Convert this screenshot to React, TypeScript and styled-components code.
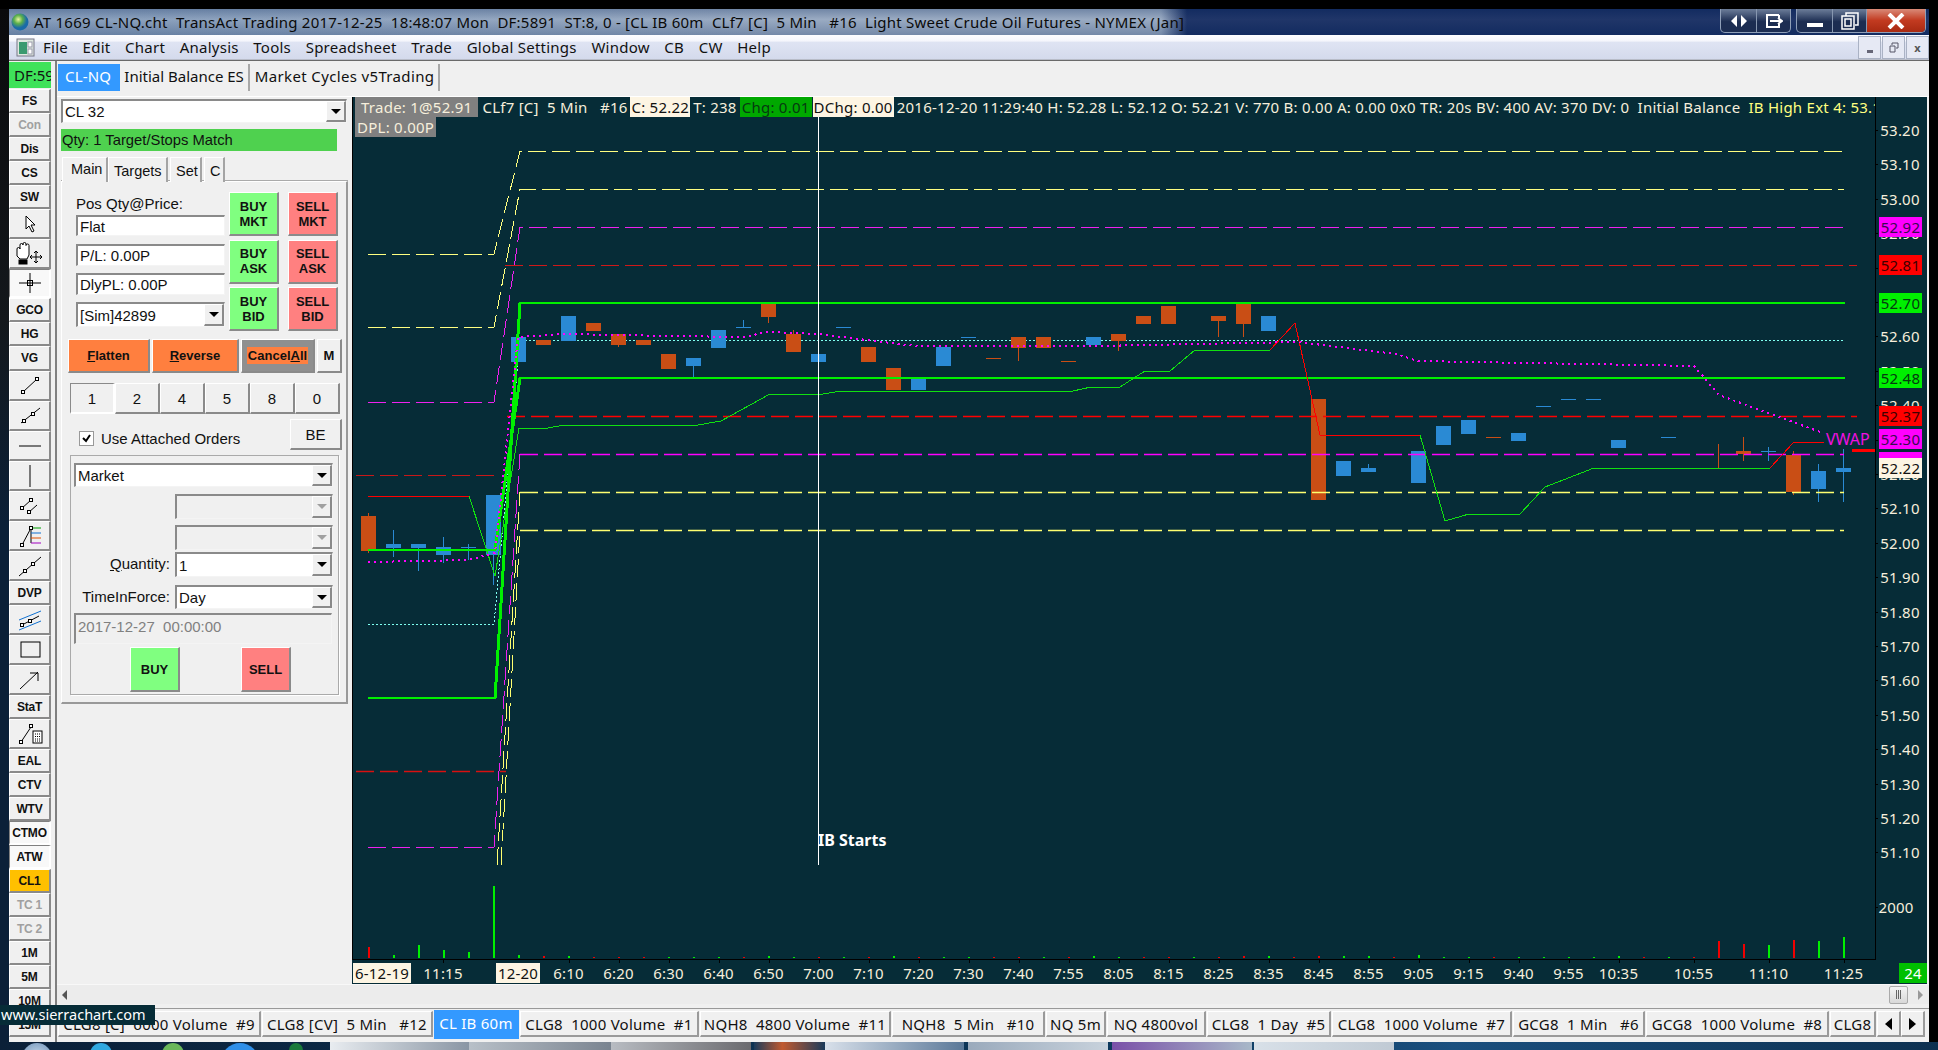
import React from "react";
import styled, { createGlobalStyle } from "styled-components";

const Global = createGlobalStyle`
  html, body { margin: 0; padding: 0; background: #000; overflow: hidden; }
  * { box-sizing: border-box; }
`;

const UI = `"Noto Sans", "Open Sans", sans-serif`;
const PANEL = `"Liberation Sans", Arial, sans-serif`;

const Page = styled.div`
  width: 1938px; height: 1050px; position: relative; overflow: hidden; background: #000;
  display: flex; flex-direction: column; padding-top: 9px; font-family: ${UI};
`;
const Shell = styled.div`display: flex; height: 1033px; flex: none;`;
const LeftEdge = styled.div`width: 9px; flex: none; background: linear-gradient(#0a0a0c 0, #14181c 30%, #0b2038 50%, #0b2038 100%);`;
const AppWindow = styled.div`width: 1920px; flex: none; display: flex; flex-direction: column; background: #f0f0f0;`;

const TitleBar = styled.div`
  height: 26px; flex: none; display: flex; align-items: center; position: relative;
  background:
    linear-gradient(rgba(20,50,100,.28), rgba(255,255,255,.06) 40%, rgba(20,50,100,.25)),
    linear-gradient(to right, #8199b8 0, #94a6bf 40%, #94a6bf 1152px, #12295f 1178px);
`;
const Globe = styled.svg`width: 18px; height: 24px; margin-left: 2px; flex: none;`;
const TitleText = styled.div`
  margin-left: 5px; font-size: 15px; color: #0a0a0a; white-space: pre; letter-spacing: 0.24px; flex: 1;
`;
const CaptionGroup = styled.div`
  display: flex; height: 24px; align-self: flex-start; border: 1px solid #8f9fb8; border-top: none;
  border-radius: 0 0 5px 5px; overflow: hidden; margin-right: ${(p) => p.$mr}px; background: linear-gradient(#6c7d99, #1c2d52 55%, #1c2d52);
`;
const CaptionBtn = styled.div`
  width: ${(p) => p.$w}px; height: 100%; display: flex; align-items: center; justify-content: center;
  border-left: 1px solid #8797b0; color: #fff;
  &:first-child { border-left: none; }
  ${(p) => p.$close && "background: linear-gradient(#d98a78, #c23a20 50%, #a82a12);"}
`;

const MenuBar = styled.div`
  height: 25px; flex: none; display: flex; align-items: center;
  background: linear-gradient(#fdfdff 0, #f5f6fc 25%, #dfe4f3 30%, #d4daec 100%);
  border-bottom: 1px solid #b8bcc8;
`;
const MenuIcon = styled.svg`width: 19px; height: 19px; margin-left: 7px; margin-right: 8px; flex: none;`;
const MenuItem = styled.span`font-size: 15px; color: #111; margin-right: 14.6px; letter-spacing: 0.25px;`;
const MdiGroup = styled.div`display: flex; margin-left: auto; height: 23px; align-self: flex-end; gap: 1px;`;
const MdiBtn = styled.div`
  width: 23px; height: 100%; display: flex; align-items: center; justify-content: center;
  border: 1px solid #aab2c4; background: #e6e9f4; color: #555; font-size: 11px; font-weight: 700;
`;

const MainRow = styled.div`display: flex; flex: 1; min-height: 0; border-top: 1px solid #6a6a6a; position: relative;`;
const Toolbar = styled.div`
  width: 43px; flex: none; padding-left: 0; display: flex; flex-direction: column; overflow: hidden; margin-top: 1px;
`;
const DfBox = styled.div`
  height: 26px; width: 42px; background: #3fe25a; font-size: 15px; color: #111; overflow: hidden;
  white-space: nowrap; padding-left: 5px; line-height: 26px; margin-bottom: 1px; flex: none;
`;
const Tool = styled.div`
  width: 42px; height: ${(p) => p.$h}px; flex: none; display: flex; align-items: center; justify-content: center;
  font: bold 12px ${PANEL}; letter-spacing: -0.2px;
  color: ${(p) => (p.$dim ? "#a0a0a0" : "#111")};
  background: ${(p) => (p.$amber ? "#ffc000" : p.$on ? "#f8f8f8" : "#f0f0f0")};
  border-style: solid; border-width: 1px 2px 2px 1px;
  border-color: ${(p) => (p.$on ? "#808080 #fff #fff #808080" : "#fff #8a8a8a #8a8a8a #fff")};
`;
const ToolIcon = styled.svg`width: 26px; height: 24px; display: block; overflow: visible;`;

const Workspace = styled.div`
  width: 1874px; margin-left: 3px; flex: none; display: flex; flex-direction: column; border-left: 2px solid #808080; background: #f0f0f0;
`;
const TabsTop = styled.div`height: 36px; flex: none; display: flex; padding: 3px 0 0 1px; align-items: flex-start; border-bottom: 1px solid #fff;`;
const TopTab = styled.div`
  height: 27px; font-size: 15px; line-height: 25px; padding: 0 ${(p) => (p.$pad ? p.$pad : 4)}px; white-space: nowrap; color: #111; letter-spacing: ${(p) => p.$ls ?? 0.2}px;
  border-right: 2px solid #a8a8a8; margin-right: 1px;
  ${(p) => p.$active && "background: #3399ff; color: #fff; border-right-color: #3399ff; margin-right: 0;"}
`;
const ContentRow = styled.div`display: flex; height: 887px; flex: none;`;
const Side = styled.div`width: 295px; flex: none; padding: 2px 0 0 4px; background: #f0f0f0;`;
const ChartBox = styled.div`
  width: 1575px; height: 887px; flex: none; position: relative; background: #062c37;
`;
const ChartSvg = styled.svg`display: block; width: 1575px; height: 887px;`;

const InfoOverlay = styled.div`
  position: absolute; left: 0; top: 0; width: 1523px; overflow: hidden; font-size: 15px; color: #f6efdc;
  white-space: pre; line-height: 20px; letter-spacing: 0.25px;
`;
const InfoRow = styled.div`display: flex; padding-left: 3px; height: 20px;`;
const Chip = styled.span`
  padding: 0 ${(p) => p.$px ?? 0}px; margin-left: ${(p) => p.$ml ?? 0}px; flex: none;
  ${(p) => p.$bg && `background: ${p.$bg};`}
  ${(p) => p.$c && `color: ${p.$c};`}
  ${(p) => p.$w && `width: ${p.$w}px;`}
`;

const AxisText = styled.text`font: 15px ${UI}; fill: ${(p) => p.$c || "#f6efdc"}; text-anchor: middle; letter-spacing: 0.2px;`;
const TagRect = styled.rect`shape-rendering: crispEdges;`;
const StartLabel = styled.text`font: bold 16px ${UI}; fill: #fff;`;
const VwapLabel = styled.text`font: 16px ${UI}; fill: #f010e0;`;

const SunkenBox = styled.div`
  display: flex; align-items: ${(p) => (p.$top ? "flex-start" : "center")}; background: ${(p) => (p.$off ? "#f0f0f0" : "#fff")}; flex: none;
  width: ${(p) => p.$w}px; height: ${(p) => p.$h}px; margin-top: ${(p) => p.$mt ?? 0}px;
  border-style: solid; border-width: 2px 1px 1px 2px; border-color: #8a8a8a #f4f4f4 #f4f4f4 #8a8a8a;
  font: 15px ${PANEL}; color: ${(p) => (p.$grey ? "#808080" : "#111")}; padding: ${(p) => (p.$top ? "3px" : "0")} 0 0 2px; overflow: hidden; white-space: pre;
`;
const SelectArrow = styled.div`
  margin-left: auto; width: 20px; height: 100%; flex: none; display: flex; align-items: center; justify-content: center;
  background: #f0f0f0; border-style: solid; border-width: 1px 2px 2px 1px; border-color: #fff #8a8a8a #8a8a8a #fff;
  &::after { content: ""; border-left: 5px solid transparent; border-right: 5px solid transparent;
    border-top: 5px solid ${(p) => (p.$off ? "#a0a0a0" : "#000")}; }
`;
const StatusBar = styled.div`
  width: 276px; height: 22px; margin-top: 6px; background: #4fd14f; font: 14.8px/22px ${PANEL}; color: #111; padding-left: 1px; white-space: nowrap;
`;
const PanelTabs = styled.div`display: flex; height: 25px; margin-top: 6px; padding-left: 1px; position: relative; z-index: 1;`;
const PanelTab = styled.div`
  font: 14.5px ${PANEL}; color: #111; padding: ${(p) => (p.$on ? "3px 8px 0" : "5px 5px 0")}; margin-right: ${(p) => (p.$on ? 0 : 2)}px;
  width: ${(p) => p.$w}px; text-align: center;
  border-style: solid; border-width: 1px 2px 0 1px; border-color: #fff #a4a4a4 #a4a4a4 #fff; background: #f0f0f0;
`;
const TabPanel = styled.div`
  width: 287px; height: 523px; margin-top: -1px; border: 1px solid #fff; border-right: 2px solid #999; border-bottom: 2px solid #999;
  box-shadow: 0 -1px 0 #aaa; padding-top: 10px;
`;
const OrderGrid = styled.div`display: flex; padding-left: 14px;`;
const PosColumn = styled.div`width: 149px; display: flex; flex-direction: column;`;
const PosLabel = styled.div`height: 23px; font: 15px/23px ${PANEL}; color: #111;`;
const BtnColumn = styled.div`width: 50px; margin-left: ${(p) => p.$ml}px; display: flex; flex-direction: column; gap: 3.5px;`;
const Raised = styled.div`
  display: flex; align-items: center; justify-content: center; text-align: center; flex: none;
  width: ${(p) => (p.$w ? `${p.$w}px` : "auto")}; height: ${(p) => p.$h}px; margin-left: ${(p) => (p.$push ? "auto" : "0")};
  background: ${(p) => p.$bg || "#f0f0f0"};
  border-style: solid; border-width: 1px 2px 2px 1px;
  border-color: ${(p) => (p.$down ? "#8a8a8a #fff #fff #8a8a8a" : "#fff #8a8a8a #8a8a8a #fff")};
  font: ${(p) => (p.$plain ? "" : "bold ")}${(p) => p.$fs || 13}px/15px ${PANEL}; color: #111;
`;
const ActionRow = styled.div`display: flex; gap: 2px; margin: 8px 0 0 6px;`;
const CancelText = styled.span`background: #ff7f3f; padding: 1px;`;
const NumRow = styled.div`display: flex; margin: 10px 0 0 8px;`;
const CheckRow = styled.div`display: flex; align-items: center; margin: 5px 0 0 17px; width: 263px;`;
const CheckMark = styled.div`
  width: 15px; height: 15px; border: 1px solid #999; background: #fff; display: flex; align-items: center; justify-content: center; margin-top: 8px;
`;
const CheckLabel = styled.span`font: 15px ${PANEL}; color: #111; margin: 8px 0 0 7px;`;
const GroupBox = styled.div`
  width: 269px; height: 240px; margin: 5px 0 0 8px; border: 1px solid #aaa; box-shadow: 1px 1px 0 #fff; padding: 7px 5px 0 3px;
`;
const FieldRow = styled.div`display: flex; justify-content: flex-end; align-items: center; gap: 5px; margin-top: ${(p) => p.$mt}px; height: ${(p) => p.$h}px;`;
const FieldLabel = styled.span`font: 15px ${PANEL}; color: #111; margin-top: -2px;`;
const SubmitRow = styled.div`display: flex; gap: 61px; margin: 3px 0 0 56px;`;

const HScroll = styled.div`
  height: 20px; flex: none; display: flex; align-items: center; justify-content: space-between; padding: 0 6px 0 5px;
  background: #ececec; border-top: 1px solid #f8f8f8;
`;
const ScrollEnd = styled.div`display: flex; align-items: center; gap: 10px;`;
const ScrollArrow = styled.div`
  width: 0; height: 0; border-top: 5px solid transparent; border-bottom: 5px solid transparent;
  ${(p) => (p.$left ? "border-right: 5px solid #555;" : "border-left: 5px solid #999;")}
`;
const Thumb = styled.div`
  width: 19px; height: 18px; border: 1px solid #aaa; border-radius: 2px; background: linear-gradient(#f4f4f4, #d8d8d8);
  display: flex; align-items: center; justify-content: center; gap: 1px;
  & > i { display: block; width: 1px; height: 9px; background: #666; }
`;
const BottomTabs = styled.div`
  height: 34px; margin-top: 4px; flex: none; display: flex; align-items: flex-start; padding: 1px 0 0 1px; border-top: 1px solid #999; background: #f0f0f0; overflow: hidden; position: relative;
`;
const BottomTab = styled.div`
  height: 26px; width: ${(p) => p.$w}px; margin-top: 1px; flex: none; overflow: hidden; font-size: 15px; line-height: 24px; text-align: center; white-space: pre; color: #111;
  border-style: solid; border-width: 1px 2px 2px 1px; border-color: #fff #9a9a9a #9a9a9a #fff; letter-spacing: 0.25px; margin-right: 1px;
  ${(p) => p.$active && "background: #3399ff; color: #fff; margin-top: 0; height: 29px; border-color: #3399ff;"}
`;
const TabArrow = styled.div`
  width: 24px; height: 26px; margin-top: 1px; flex: none; display: flex; align-items: center; justify-content: center;
  border-style: solid; border-width: 1px 2px 2px 1px; border-color: #fff #9a9a9a #9a9a9a #fff;
  &::after { content: ""; border-top: 6px solid transparent; border-bottom: 6px solid transparent;
    ${(p) => (p.$left ? "border-right: 7px solid #000;" : "border-left: 7px solid #000;")} }
`;
const Url = styled.div`
  position: absolute; left: 0; top: 1005px; width: 155px; height: 20px; background: #062c37; color: #fff; font-size: 14.5px; line-height: 19px; white-space: nowrap; overflow: hidden; padding-left: 1px;
`;
const Taskbar = styled.div`
  height: 8px; flex: none; display: flex; align-items: flex-start; overflow: hidden;
  background: linear-gradient(to right, #0b2038 0, #0d3a5e 60%, #1a4f7e 75%, #0d3050 100%);
`;
const Orb = styled.div`
  width: ${(p) => p.$d}px; height: ${(p) => p.$d}px; border-radius: 50%; flex: none; margin-left: ${(p) => p.$ml}px; margin-top: 1px;
  background: ${(p) => p.$c};
`;
const TaskBtn = styled.div`
  height: 8px; width: ${(p) => p.$w}px; margin-left: ${(p) => p.$ml ?? 0}px; flex: none; background: ${(p) => p.$bg};
`;

/* ------- chart data ------- */
type C = [number, "b" | "o", number, number, number?, number?];
const candles: C[] = [
  [0, "o", 516, 551, 513, 553], [1, "b", 544, 548, 530, 557], [2, "b", 544, 548, 544, 571], [3, "b", 547, 555, 537, 563],
  [4, "b", 547, 547, 544, 560], [5, "b", 495, 555, 495, 585], [6, "b", 337, 362, 327, 362], [7, "o", 340, 345],
  [8, "b", 316, 341], [9, "o", 323, 331], [10, "o", 334, 345, 334, 347], [11, "o", 340, 345], [12, "o", 354, 369],
  [13, "b", 358, 366, 358, 378], [14, "b", 330, 348], [15, "b", 327, 327, 320, 327], [16, "o", 304, 317, 304, 323],
  [17, "o", 334, 352, 330, 352], [18, "b", 354, 362], [19, "b", 327, 327], [20, "o", 347, 362], [21, "o", 368, 390],
  [22, "b", 379, 390], [23, "b", 347, 366], [24, "b", 337, 337], [25, "o", 358, 358], [26, "o", 337, 348, 337, 361],
  [27, "o", 337, 348], [28, "o", 361, 361], [29, "b", 337, 345], [30, "o", 334, 341, 334, 351], [31, "o", 316, 324],
  [32, "o", 306, 324], [34, "o", 316, 321, 316, 337], [35, "o", 304, 324, 304, 337], [36, "b", 316, 331],
  [38, "o", 399, 500], [39, "b", 461, 476], [40, "b", 468, 472, 464, 472], [42, "b", 451, 483], [43, "b", 426, 445],
  [44, "b", 420, 434], [45, "o", 437, 437], [46, "b", 433, 441], [47, "b", 406, 406], [48, "b", 399, 399], [49, "b", 399, 399],
  [50, "b", 440, 448], [52, "b", 437, 437], [54, "o", 468, 468, 444, 468], [55, "o", 451, 454, 437, 461],
  [56, "b", 451, 451, 447, 461], [57, "o", 455, 492, 451, 495], [58, "b", 471, 489, 464, 502], [59, "b", 468, 472, 449, 502],
];
const cx = (i: number) => 368.5 + 25 * i;
const vols: [number, "g" | "r", number][] = [
  [0, "r", 11], [1, "g", 3], [2, "g", 13], [3, "g", 8], [4, "g", 6], [5, "g", 72], [6, "g", 3], [7, "r", 2], [8, "g", 2], [9, "r", 1], [10, "r", 1],
  [11, "r", 1], [12, "g", 1], [13, "g", 1], [14, "g", 1], [15, "r", 1], [16, "g", 2], [17, "g", 1], [18, "r", 1], [19, "g", 1], [20, "r", 1],
  [21, "g", 2], [22, "r", 1], [23, "g", 1], [24, "g", 1], [25, "r", 1], [26, "r", 1], [27, "g", 1], [28, "r", 1], [29, "g", 2], [30, "g", 1],
  [31, "r", 1], [32, "r", 1], [33, "g", 1], [34, "r", 1], [35, "r", 2], [36, "g", 2], [37, "r", 1], [38, "r", 2], [39, "g", 2], [40, "g", 2],
  [41, "r", 1], [42, "g", 3], [43, "g", 1], [44, "g", 1], [45, "r", 1], [46, "g", 1], [47, "g", 1], [48, "g", 1], [49, "g", 1], [50, "g", 2],
  [51, "r", 1], [52, "g", 1], [53, "r", 1], [54, "r", 17], [55, "r", 14], [56, "g", 13], [57, "r", 18], [58, "g", 17], [59, "g", 21],
];
const prices = ["53.20", "53.10", "53.00", "52.90", "52.80", "52.70", "52.60", "52.50", "52.40", "52.30", "52.20", "52.10", "52.00", "51.90", "51.80", "51.70", "51.60", "51.50", "51.40", "51.30", "51.20", "51.10"];
const tags: [string, number, string, string][] = [
  ["52.92", 217, "#ff00ff", "#3a0a50"], ["52.81", 255, "#ff0000", "#400000"], ["52.70", 293, "#00f000", "#053a10"],
  ["52.48", 368, "#00f000", "#053a10"], ["52.37", 406, "#ff0000", "#400000"], ["52.30", 429, "#ff00ff", "#3a0a50"],
];
const times: [string, number][] = [
  ["11:15", 443], ["6:10", 568.5], ["6:20", 618.5], ["6:30", 668.5], ["6:40", 718.5], ["6:50", 768.5], ["7:00", 818.5], ["7:10", 868.5],
  ["7:20", 918.5], ["7:30", 968.5], ["7:40", 1018.5], ["7:55", 1068.5], ["8:05", 1118.5], ["8:15", 1168.5], ["8:25", 1218.5], ["8:35", 1268.5],
  ["8:45", 1318.5], ["8:55", 1368.5], ["9:05", 1418.5], ["9:15", 1468.5], ["9:40", 1518.5], ["9:55", 1568.5], ["10:35", 1618.5],
  ["10:55", 1693.5], ["11:10", 1768.5], ["11:25", 1843.5],
];
const upperDashed: [string, string][] = [
  ["368,254 494,254 520,151 1844,151", "#ffff80"],
  ["368,327 494,327 520,189 1844,189", "#ffff80"],
  ["368,402 494,402 520,227 1844,227", "#ee22ee"],
  ["356,475 495,475", "#c81818"],
  ["505,265 1857,265", "#d01818"],
  ["368,847 494,847 520,454", "#ee22ee"],
  ["497,865 520,492", "#ffff70"],
  ["501,865 520,530", "#ffff70"],
];
const lowerDashed: [string, string][] = [
  ["520,454 1844,454", "#ff00ff"],
  ["356,771 506,771", "#d81010"],
  ["507,416 1857,416", "#ff0000"],
  ["520,492 1844,492", "#ffff70"],
  ["520,530 1844,530", "#ffff70"],
];
const greenA = "469,496 495,576 519,428 548,428 564,425 698,425 721,421 770,394 823,394 841,391 1073,391 1091,387 1120,387 1145,371 1170,371 1195,350 1270,350";
const redA = "1270,350 1295,323 1320,435 1420,435";
const greenB = "1420,435 1445,521 1469,514 1520,514 1545,487 1594,468 1770,468";
const redB = "1770,468 1794,442 1824,442";
const vwap = "368,562 468,560 495,553 518,337 564,334 671,336 743,337 768,332 818,334 907,345 918,346 1096,346 1196,344 1298,342 1396,354 1418,361 1694,366 1719,395 1774,415 1823,433";

const Chart = () => (
  <ChartSvg viewBox="352 97 1575 887">
    <g shapeRendering="crispEdges">
      <rect x="352" y="97" width="1" height="862" fill="#000" />
      {upperDashed.map(([p, c], i) => <polyline key={i} points={p} fill="none" stroke={c} strokeWidth="1" strokeDasharray="18 6" />)}
      <polyline points="368,624 494,624 520,340 1845,340" fill="none" stroke="#7ffff0" strokeWidth="1" strokeDasharray="2 2" />
      {candles.map(([i, k, t, b, wt, wb]) => {
        const col = k === "b" ? "#2a8ad4" : "#c94e15";
        const x = cx(i);
        return (
          <g key={i}>
            {wt !== undefined && <rect x={x - 0.5} y={wt} width="1" height={(wb as number) - wt} fill={col} />}
            <rect x={x - 7.5} y={t} width="15" height={Math.max(b - t, 1)} fill={col} />
          </g>
        );
      })}
    </g>
    <g transform="translate(0 .5)">
      {lowerDashed.map(([p, c], i) => <polyline key={i} points={p} fill="none" stroke={c} strokeWidth="1.5" strokeDasharray="18 6" />)}
    </g>
    <g shapeRendering="crispEdges">
      <polyline points="368,698 495,698 520,303 1845,303" fill="none" stroke="#00f000" strokeWidth="2" />
      <polyline points="368,550 495,550 520,378 1845,378" fill="none" stroke="#00f000" strokeWidth="2" />
      <line x1="495" y1="698" x2="520" y2="303" stroke="#00f000" strokeWidth="3" />
      <line x1="495" y1="550" x2="520" y2="378" stroke="#00f000" strokeWidth="3" />
      <line x1="368" y1="496" x2="469" y2="496" stroke="#ff0000" />
      <polyline points={greenA} fill="none" stroke="#10e010" />
      <polyline points={redA} fill="none" stroke="#ff0000" />
      <polyline points={greenB} fill="none" stroke="#10e010" />
      <polyline points={redB} fill="none" stroke="#ff0000" />
      <polyline points={vwap} fill="none" stroke="#ff00ff" strokeWidth="2" strokeDasharray="2 4" />
      <line x1="818" y1="117" x2="818" y2="865" stroke="#fff" />
      <rect x="1852" y="449" width="23" height="3" fill="#ff0000" />
      {vols.map(([i, k, h]) => (
        <rect key={i} x={cx(i) - 1} y={958 - h} width={2} height={h} fill={k === "g" ? "#00f000" : "#f00000"} />
      ))}
      <rect x="1875" y="97" width="1" height="862" fill="#000" />
      <rect x="352" y="958.5" width="1524" height="1.5" fill="#000" />
      {times.map(([, x]) => <rect key={x} x={x} y="960" width="1" height="3" fill="#000" />)}
      {prices.map((_, i) => <rect key={i} x="1876" y={130 + i * 34.4} width="2" height="1" fill="#000" />)}
    </g>
    {prices.map((p, i) => <AxisText key={p} x="1900" y={136 + i * 34.4}>{p}</AxisText>)}
    <AxisText x="1896" y="913">2000</AxisText>
    <rect x="1876" y="907" width="2" height="1" fill="#000" />
    {tags.map(([t, y, bg, fg]) => (
      <g key={t}>
        <TagRect x="1879" y={y} width="43" height="20" fill={bg} />
        <AxisText x="1900.5" y={y + 15.5} $c={fg}>{t}</AxisText>
      </g>
    ))}
    <TagRect x="1879" y="452" width="43" height="7" fill="#ff00ff" />
    <TagRect x="1879" y="458" width="43" height="20" fill="#fdf5e3" />
    <AxisText x="1900.5" y="473.5" $c="#111">52.22</AxisText>
    <VwapLabel x="1826" y="445">VWAP</VwapLabel>
    <StartLabel x="818" y="846">IB Starts</StartLabel>
    <TagRect x="353" y="963" width="58" height="20" fill="#fdf5e3" />
    <AxisText x="382" y="978.5" $c="#111">6-12-19</AxisText>
    <TagRect x="496" y="963" width="44" height="20" fill="#fdf5e3" />
    <AxisText x="518" y="978.5" $c="#111">12-20</AxisText>
    {times.map(([t, x]) => <AxisText key={t} x={x} y="978.5">{t}</AxisText>)}
    <TagRect x="1899" y="963" width="28" height="20" fill="#00c000" />
    <AxisText x="1913" y="978.5" $c="#fff">24</AxisText>
  </ChartSvg>
);

/* ------- toolbar icons ------- */
const Sq = ({ x, y }: { x: number; y: number }) => <rect x={x - 1.5} y={y - 1.5} width="3" height="3" fill="#fff" stroke="#000" />;
const icons: Record<string, React.ReactNode> = {
  pointer: <path d="M9 4 L9 17 L12 14 L15 20 L17 19 L14 13 L18 13 Z" fill="#fff" stroke="#000" />,
  hand: (
    <g stroke="#000" fill="none" transform="translate(-2 0)">
      <path d="M2 14 V7 q0-1.5 1.5-1.5 T5 7 V3 q0-1.5 1.5-1.5 T8 3 V2 q0-1.5 1.5-1.5 T11 2 V3.5 q0-1.5 1.5-1.5 T14 3.5 V13 L12 17 H5 Z" fill="#fff" />
      <rect x="4" y="18" width="8" height="4" fill="#000" />
      <path d="M21 9 V21 M15 15 H27 M19 11 L21 9 L23 11 M19 19 L21 21 L23 19 M17 13 L15 15 L17 17 M25 13 L27 15 L25 17" />
    </g>
  ),
  cross: <g stroke="#000" fill="none"><path d="M13 2 V22 M2 12 H24" /><rect x="10.5" y="9.5" width="5" height="5" /></g>,
  line1: <g><path d="M6 18 L20 5" stroke="#000" /><Sq x={6} y={18} /><Sq x={20} y={5} /></g>,
  line2: <g><path d="M4 19 L23 4" stroke="#000" /><Sq x={7} y={17} /><Sq x={16} y={10} /></g>,
  hline: <path d="M2 12 H24" stroke="#000" />,
  vline: <path d="M13 1 V23" stroke="#000" />,
  para: <g><path d="M4 15 L14 6 M11 19 L20 11" stroke="#000" /><Sq x={5} y={14} /><Sq x={14} y={6} /><Sq x={12} y={18} /></g>,
  fib: (
    <g>
      <path d="M5 21 L14 4 V19" stroke="#000" fill="none" />
      <path d="M14 4 H24" stroke="#00a000" /><path d="M14 9 H24" stroke="#1070d0" /><path d="M14 14 H24" stroke="#e05000" /><path d="M14 19 H24" stroke="#a000c0" />
      <Sq x={5} y={21} /><Sq x={14} y={4} />
    </g>
  ),
  ext: <g><path d="M2 22 L24 3" stroke="#000" /><Sq x={8} y={17} /><Sq x={16} y={10} /></g>,
  chan: (
    <g>
      <path d="M2 12 L24 3 M2 22 L24 13" stroke="#1070d0" />
      <path d="M5 17 L22 8" stroke="#000" /><Sq x={5} y={17} /><Sq x={13} y={13} />
    </g>
  ),
  rect: <rect x="4" y="4" width="19" height="15" fill="none" stroke="#000" />,
  arrow: <path d="M3 21 L21 4 M13 5 H21 V13" stroke="#000" fill="none" />,
  calc: (
    <g>
      <path d="M4 20 L14 5" stroke="#000" /><Sq x={4} y={20} /><Sq x={14} y={4} />
      <rect x="16" y="9" width="9" height="12" fill="#fff" stroke="#000" />
      <path d="M18 12 H23 M18 14.5 H23 M18 17 H23 M18 19 H23" stroke="#000" strokeDasharray="1 1" />
    </g>
  ),
};
type T = { l?: string; i?: string; h: number; dim?: boolean; on?: boolean; amber?: boolean };
const tools: T[] = [
  { l: "FS", h: 24 }, { l: "Con", h: 24, dim: true }, { l: "Dis", h: 24 }, { l: "CS", h: 24 }, { l: "SW", h: 24 },
  { i: "pointer", h: 30 }, { i: "hand", h: 30 }, { i: "cross", h: 29, on: true }, { l: "GCO", h: 24 }, { l: "HG", h: 24 }, { l: "VG", h: 25 },
  { i: "line1", h: 30 }, { i: "line2", h: 30 }, { i: "hline", h: 30 }, { i: "vline", h: 30 }, { i: "para", h: 30 }, { i: "fib", h: 30 }, { i: "ext", h: 30 },
  { l: "DVP", h: 24 }, { i: "chan", h: 30 }, { i: "rect", h: 30 }, { i: "arrow", h: 30 }, { l: "StaT", h: 24 }, { i: "calc", h: 30 },
  { l: "EAL", h: 24 }, { l: "CTV", h: 24 }, { l: "WTV", h: 24 }, { l: "CTMO", h: 24, on: true }, { l: "ATW", h: 24, on: true }, { l: "CL1", h: 24, amber: true },
  { l: "TC 1", h: 24, dim: true }, { l: "TC 2", h: 24, dim: true }, { l: "1M", h: 24 }, { l: "5M", h: 24 }, { l: "10M", h: 24 }, { l: "15M", h: 24 },
];

const menus = ["File", "Edit", "Chart", "Analysis", "Tools", "Spreadsheet", "Trade", "Global Settings", "Window", "CB", "CW", "Help"];
const bottomTabs: [string, number, boolean?][] = [
  ["CLG8 [C]  6000 Volume  #9", 203], ["CLG8 [CV]  5 Min   #12", 171], ["CL IB 60m", 85, true], ["CLG8  1000 Volume  #1", 179],
  ["NQH8  4800 Volume  #11", 191], ["NQH8  5 Min   #10", 153], ["NQ 5m", 60], ["NQ 4800vol", 99], ["CLG8  1 Day  #5", 124],
  ["CLG8  1000 Volume  #7", 180], ["GCG8  1 Min   #6", 132], ["GCG8  1000 Volume  #8", 183], ["CLG8", 46],
];

const Select = ({ w, h, mt, text, off }: { w: number; h: number; mt?: number; text?: string; off?: boolean }) => (
  <SunkenBox $w={w} $h={h} $mt={mt} $off={off}>{text}<SelectArrow $off={off} /></SunkenBox>
);

export default function App() {
  return (
    <Page>
      <Global />
      <Shell>
        <LeftEdge />
        <AppWindow>
          <TitleBar>
            <Globe viewBox="0 0 18 24">
              <defs><radialGradient id="gl" cx="40%" cy="35%"><stop offset="0" stopColor="#e8f4a0" /><stop offset=".5" stopColor="#5db04a" /><stop offset="1" stopColor="#1a6aa8" /></radialGradient></defs>
              <circle cx="9" cy="12" r="8.5" fill="url(#gl)" />
            </Globe>
            <TitleText>AT 1669 CL-NQ.cht  TransAct Trading 2017-12-25  18:48:07 Mon  DF:5891  ST:8, 0 - [CL IB 60m  CLf7 [C]  5 Min   #16  Light Sweet Crude Oil Futures - NYMEX (Jan]</TitleText>
            <CaptionGroup $mr={5}>
              <CaptionBtn $w={35}><svg width="18" height="16"><path d="M7 2 L1 8 L7 14 Z M11 2 L17 8 L11 14 Z" fill="#fff" /></svg></CaptionBtn>
              <CaptionBtn $w={34}><svg width="18" height="16"><path d="M14 2 H2 V14 H14 V11 M14 5 V2 M5 8 H17 M13 5 L17 8 L13 11" stroke="#fff" strokeWidth="2" fill="none" /></svg></CaptionBtn>
            </CaptionGroup>
            <CaptionGroup $mr={3}>
              <CaptionBtn $w={35}><svg width="16" height="16"><rect x="0" y="10" width="16" height="4" fill="#fff" /></svg></CaptionBtn>
              <CaptionBtn $w={34}><svg width="18" height="18"><path d="M5 4 V1 H17 V13 H14 M1 4 H13 V17 H1 Z M4 7 H10 V14 H4 Z" stroke="#fff" strokeWidth="1.5" fill="none" /></svg></CaptionBtn>
              <CaptionBtn $w={59} $close><svg width="18" height="16"><path d="M2 1 L16 15 M16 1 L2 15" stroke="#fff" strokeWidth="4" /></svg></CaptionBtn>
            </CaptionGroup>
          </TitleBar>
          <MenuBar>
            <MenuIcon viewBox="0 0 19 19">
              <rect x="1" y="1" width="17" height="17" fill="#dfe8e0" stroke="#778" />
              <rect x="3" y="4" width="8" height="12" fill="#3a9a70" /><rect x="12" y="4" width="4" height="5" fill="#fff" stroke="#99a" /><rect x="12" y="11" width="4" height="5" fill="#fff" stroke="#99a" />
            </MenuIcon>
            {menus.map((m) => <MenuItem key={m}>{m}</MenuItem>)}
            <MdiGroup>
              <MdiBtn><svg width="8" height="12"><rect x="1" y="8" width="6" height="3" fill="#667" /></svg></MdiBtn>
              <MdiBtn><svg width="10" height="12"><path d="M3 3 V1 H9 V6 H7 M1 4 H6 V10 H1 Z" stroke="#556" fill="none" /></svg></MdiBtn>
              <MdiBtn>x</MdiBtn>
            </MdiGroup>
          </MenuBar>
          <MainRow>
            <Toolbar>
              <DfBox>DF:59</DfBox>
              {tools.map((t, i) => (
                <Tool key={i} $h={t.h} $dim={t.dim} $on={t.on} $amber={t.amber}>
                  {t.l ?? <ToolIcon viewBox="0 0 26 24">{icons[t.i as string]}</ToolIcon>}
                </Tool>
              ))}
            </Toolbar>
            <Workspace>
              <TabsTop>
                <TopTab $active $pad={7}>CL-NQ</TopTab>
                <TopTab $ls={0}>Initial Balance ES</TopTab>
                <TopTab $ls={0.35}>Market Cycles v5Trading</TopTab>
              </TabsTop>
              <ContentRow>
                <Side>
                  <Select w={286} h={24} text="CL 32" />
                  <StatusBar>Qty: 1 Target/Stops Match</StatusBar>
                  <PanelTabs>
                    <PanelTab $on $w={46}>Main</PanelTab>
                    <PanelTab $w={60}>Targets</PanelTab>
                    <PanelTab $w={32}>Set</PanelTab>
                    <PanelTab $w={21}>C</PanelTab>
                  </PanelTabs>
                  <TabPanel>
                    <OrderGrid>
                      <PosColumn>
                        <PosLabel>Pos Qty@Price:</PosLabel>
                        <SunkenBox $w={149} $h={21}>Flat</SunkenBox>
                        <SunkenBox $w={149} $h={22} $mt={8}>P/L: 0.00P</SunkenBox>
                        <SunkenBox $w={149} $h={22} $mt={7}>DlyPL: 0.00P</SunkenBox>
                        <Select w={149} h={25} mt={7} text="[Sim]42899" />
                      </PosColumn>
                      <BtnColumn $ml={4}>
                        <Raised $h={44} $bg="#80ff80">BUY<br />MKT</Raised>
                        <Raised $h={44} $bg="#80ff80">BUY<br />ASK</Raised>
                        <Raised $h={44} $bg="#80ff80">BUY<br />BID</Raised>
                      </BtnColumn>
                      <BtnColumn $ml={9}>
                        <Raised $h={44} $bg="#ff8080">SELL<br />MKT</Raised>
                        <Raised $h={44} $bg="#ff8080">SELL<br />ASK</Raised>
                        <Raised $h={44} $bg="#ff8080">SELL<br />BID</Raised>
                      </BtnColumn>
                    </OrderGrid>
                    <ActionRow>
                      <Raised $w={82} $h={34} $bg="#ff7f3f"><span><u>F</u>latten</span></Raised>
                      <Raised $w={87} $h={34} $bg="#ff7f3f"><span><u>R</u>everse</span></Raised>
                      <Raised $w={74} $h={34} $bg="#8f8f8f"><CancelText>Cancel<u>A</u>ll</CancelText></Raised>
                      <Raised $w={25} $h={34}>M</Raised>
                    </ActionRow>
                    <NumRow>
                      {["1", "2", "4", "5", "8", "0"].map((n, i) => (
                        <Raised key={n} $w={45} $h={31} $down={i === 0} $plain $fs={15}>{n}</Raised>
                      ))}
                    </NumRow>
                    <CheckRow>
                      <CheckMark><svg width="11" height="11"><path d="M2 5 L5 8 L9 2" stroke="#000" strokeWidth="2" fill="none" /></svg></CheckMark>
                      <CheckLabel>Use Attached Orders</CheckLabel>
                      <Raised $push $w={52} $h={31} $plain $fs={15}>BE</Raised>
                    </CheckRow>
                    <GroupBox>
                      <Select w={259} h={24} text="Market" />
                      <FieldRow $mt={7} $h={25}><Select w={158} h={25} off /></FieldRow>
                      <FieldRow $mt={6} $h={25}><Select w={158} h={25} off /></FieldRow>
                      <FieldRow $mt={2} $h={25}><FieldLabel><u>Q</u>uantity:</FieldLabel><Select w={158} h={25} text="1" /></FieldRow>
                      <FieldRow $mt={8} $h={24}><FieldLabel>TimeInForce:</FieldLabel><Select w={158} h={24} text="Day" /></FieldRow>
                      <SunkenBox $w={258} $h={31} $mt={4} $off $grey $top>2017-12-27  00:00:00</SunkenBox>
                      <SubmitRow>
                        <Raised $w={50} $h={45} $bg="#80ff80">BUY</Raised>
                        <Raised $w={50} $h={45} $bg="#ff8080">SELL</Raised>
                      </SubmitRow>
                    </GroupBox>
                  </TabPanel>
                </Side>
                <ChartBox>
                  <Chart />
                  <InfoOverlay>
                    <InfoRow>
                      <Chip $bg="#808080" $px={6}>Trade: 1@52.91</Chip>
                      <Chip $ml={4} $w={147}>CLf7 [C]  5 Min   #16</Chip>
                      <Chip $ml={1} $bg="#fdf5e3" $c="#111" $px={1}>C: 52.22</Chip>
                      <Chip $ml={3}>T: 238</Chip>
                      <Chip $ml={3} $bg="#00a800" $c="#063a10" $px={2}>Chg: 0.01</Chip>
                      <Chip $ml={1} $bg="#fdf5e3" $c="#111" $px={1}>DChg: 0.00</Chip>
                      <Chip $ml={3}>2016-12-20 11:29:40 H: 52.28 L: 52.12 O: 52.21 V: 770 B: 0.00 A: 0.00 0x0 TR: 20s BV: 400 AV: 370 DV: 0  Initial Balance</Chip>
                      <Chip $ml={8} $c="#ffff80">IB High Ext 4: 53.15</Chip>
                    </InfoRow>
                    <InfoRow>
                      <Chip $bg="#808080" $px={2}>DPL: 0.00P</Chip>
                    </InfoRow>
                  </InfoOverlay>
                </ChartBox>
              </ContentRow>
              <HScroll>
                <ScrollArrow $left />
                <ScrollEnd><Thumb><i /><i /><i /></Thumb><ScrollArrow /></ScrollEnd>
              </HScroll>
              <BottomTabs>
                {bottomTabs.map(([t, w, a]) => <BottomTab key={t} $w={w} $active={a}>{t}</BottomTab>)}
                <TabArrow $left />
                <TabArrow />
              </BottomTabs>
            </Workspace>
          </MainRow>
        </AppWindow>
      </Shell>
      <Taskbar>
        <Orb $d={30} $ml={22} $c="radial-gradient(#cfe0f0,#6b8fb5)" />
        <Orb $d={22} $ml={38} $c="#2fa8e0" />
        <Orb $d={22} $ml={50} $c="#6ab85a" />
        <Orb $d={38} $ml={37} $c="#2f8fe8" />
        <Orb $d={14} $ml={30} $c="#1a7a3a" />
        <TaskBtn $w={139} $ml={27} $bg="linear-gradient(to right,#e8ecf0,#8a96a4)" />
        <TaskBtn $w={142} $bg="linear-gradient(to right,#b8c0c8,#7a8490)" />
        <TaskBtn $w={140} $bg="linear-gradient(to right,#b8bcc2,#6a6a6e)" />
        <TaskBtn $w={71} $ml={3} $bg="linear-gradient(to right,#1a3a5a,#c05a30 40%,#1a3a5a)" />
        <TaskBtn $w={139} $bg="linear-gradient(to right,#d8e0ea,#5a7898)" />
        <TaskBtn $w={140} $ml={4} $bg="linear-gradient(to right,#9aaabc,#c8d2dc)" />
        <TaskBtn $w={140} $ml={4} $bg="linear-gradient(to right,#7a50a8,#a8b8c8)" />
        <TaskBtn $w={140} $ml={2} $bg="linear-gradient(to right,#d8e0e8,#c0cad4)" />
      </Taskbar>
      <Url>www.sierrachart.com</Url>
    </Page>
  );
}
